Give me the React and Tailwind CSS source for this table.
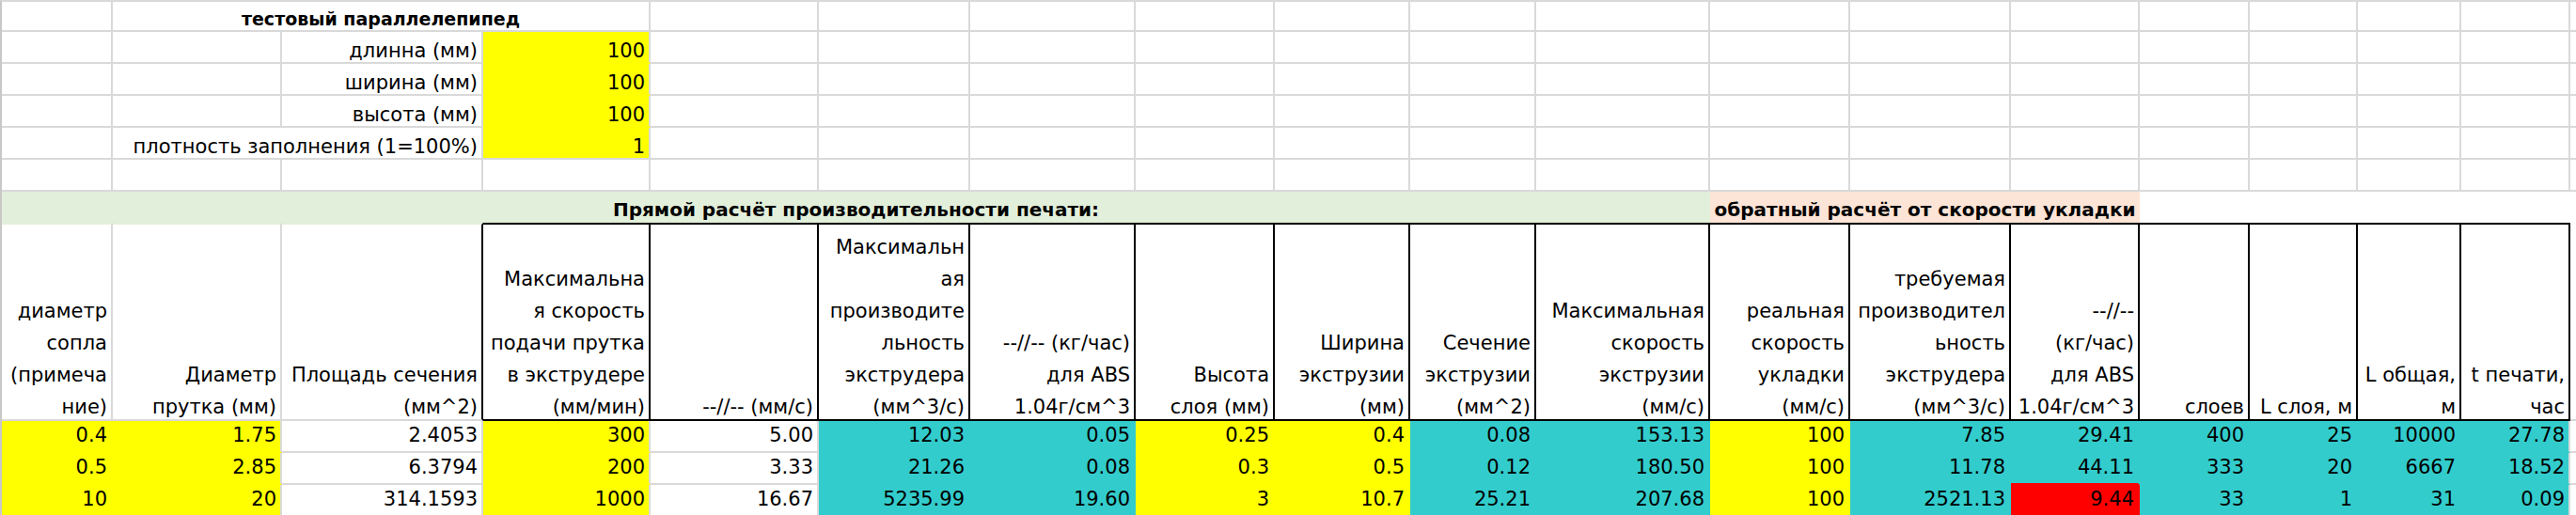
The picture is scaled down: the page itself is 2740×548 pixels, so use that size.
const fills = { y: 'bg-[#ffff00]', c: 'bg-[#33cccc]', r: 'bg-[#ff0000]', w: 'bg-white' };
const rightB = { g: 'border-r-[#d9d9d9]', y: 'border-r-[#ffff00]', c: 'border-r-[#33cccc]', r: 'border-r-[#ff0000]', k: 'border-r-black' };
const bottomB = { g: 'border-b-[#d9d9d9]', y: 'border-b-[#ffff00]', c: 'border-b-[#33cccc]', r: 'border-b-[#ff0000]', k: 'border-b-black' };

const headers = [
  ['диаметр', 'сопла', '(примеча', 'ние)'],
  ['Диаметр', 'прутка (мм)'],
  ['Площадь сечения', '(мм^2)'],
  ['Максимальна', 'я скорость', 'подачи прутка', 'в экструдере', '(мм/мин)'],
  ['--//-- (мм/с)'],
  ['Максимальн', 'ая', 'производите', 'льность', 'экструдера', '(мм^3/с)'],
  ['--//-- (кг/час)', 'для ABS', '1.04г/см^3'],
  ['Высота', 'слоя (мм)'],
  ['Ширина', 'экструзии', '(мм)'],
  ['Сечение', 'экструзии', '(мм^2)'],
  ['Максимальная', 'скорость', 'экструзии', '(мм/с)'],
  ['реальная', 'скорость', 'укладки', '(мм/с)'],
  ['требуемая', 'производител', 'ьность', 'экструдера', '(мм^3/с)'],
  ['--//--', '(кг/час)', 'для ABS', '1.04г/см^3'],
  ['слоев'],
  ['L слоя, м'],
  ['L общая,', 'м'],
  ['t печати,', 'час'],
];

const rows = [
  ['0.4', '1.75', '2.4053', '300', '5.00', '12.03', '0.05', '0.25', '0.4', '0.08', '153.13', '100', '7.85', '29.41', '400', '25', '10000', '27.78'],
  ['0.5', '2.85', '6.3794', '200', '3.33', '21.26', '0.08', '0.3', '0.5', '0.12', '180.50', '100', '11.78', '44.11', '333', '20', '6667', '18.52'],
  ['10', '20', '314.1593', '1000', '16.67', '5235.99', '19.60', '3', '10.7', '25.21', '207.68', '100', '2521.13', '9.44', '33', '1', '31', '0.09'],
];

const baseFill = ['y', 'y', 'w', 'y', 'w', 'c', 'c', 'y', 'y', 'c', 'c', 'y', 'c', 'c', 'c', 'c', 'c', 'c', 'w'];

function fillAt(r, c) {
  if (r > 2) return 'w';
  if (r === 2 && c === 13) return 'r';
  return baseFill[c];
}

function Blank({ last, bottom = 'g' }) {
  return <div className={`border-b-2 ${bottomB[bottom]} ${last ? '' : 'border-r-2 border-r-[#d9d9d9]'}`} />;
}

// empty cells from column E to S
function Rest() {
  return Array.from({ length: 15 }, (_, i) => <Blank key={i} last={i === 14} />);
}

function TopRow({ label, value, wide, last }) {
  return (
    <>
      <Blank />
      {wide ? (
        <div className="col-span-2 border-r-2 border-r-[#d9d9d9] border-b-2 border-b-[#d9d9d9] flex items-end justify-end pr-1 leading-[24px] whitespace-nowrap">
          {label}
        </div>
      ) : (
        <>
          <Blank />
          <div className="border-r-2 border-r-[#d9d9d9] border-b-2 border-b-[#d9d9d9] flex items-end justify-end pr-1 leading-[24px] whitespace-nowrap">
            {label}
          </div>
        </>
      )}
      <div className={`bg-[#ffff00] border-r-2 border-r-[#d9d9d9] border-b-2 ${last ? 'border-b-[#d9d9d9]' : 'border-b-[#ffff00]'} flex items-end justify-end pr-1 leading-[24px]`}>
        {value}
      </div>
      <Rest />
    </>
  );
}

function HeaderCell({ lines, i }) {
  let cls;
  if (i < 3) {
    cls = `border-t-2 border-t-[#e2efda] border-b-2 border-b-[#d9d9d9] border-r-2 ${i === 2 ? 'border-r-black' : 'border-r-[#d9d9d9]'}`;
  } else {
    cls = 'border-t-2 border-b-2 border-r-2 border-black';
  }
  return (
    <div className={`${cls} flex flex-col items-end justify-end pr-1 leading-[34px] whitespace-nowrap`}>
      <div className="flex flex-col items-end translate-y-1">
        {lines.map((l, k) => (
          <span key={k}>{l}</span>
        ))}
      </div>
    </div>
  );
}

function DataCell({ r, c, value }) {
  const f = fillAt(r, c);
  const next = fillAt(r, c + 1);
  const below = fillAt(r + 1, c);
  let rb = f === 'w' || next === 'w' ? 'g' : f;
  let bb = f === 'w' || below === 'w' ? 'g' : below === 'r' ? 'r' : f;
  return (
    <div className={`${fills[f]} border-r-2 ${rightB[rb]} border-b-2 ${bottomB[bb]} flex items-start justify-end pr-1 leading-[30px]`}>
      {value}
    </div>
  );
}

export default function App() {
  return (
    <div className="w-[2740px] h-[548px] overflow-hidden bg-white text-black font-['DejaVu_Sans',sans-serif] text-[21px]">
      <div className="grid grid-cols-[118px_180px_214px_178px_179px_161px_176px_148px_144px_134px_185px_149px_171px_137px_117px_115px_110px_116px_1fr] grid-rows-[32px_34px_34px_34px_34px_34px_33px_211px_34px_34px_36px] border-t-2 border-t-[#d9d9d9] border-l-2 border-l-[#c8c8c8]">
        {/* row 1 */}
        <Blank />
        <div className="col-span-3 border-r-2 border-r-[#d9d9d9] border-b-2 border-b-[#d9d9d9] flex items-end justify-center leading-[24px] font-bold text-[19px] whitespace-nowrap">
          тестовый параллелепипед
        </div>
        <Rest />

        {/* rows 2-5 */}
        <TopRow label="длинна (мм)" value="100" />
        <TopRow label="ширина (мм)" value="100" />
        <TopRow label="высота (мм)" value="100" />
        <TopRow label="плотность заполнения (1=100%)" value="1" wide last />

        {/* row 6 */}
        <Blank />
        <Blank />
        <Blank />
        <Blank />
        <Rest />

        {/* section band */}
        <div className="col-span-11 bg-[#e2efda] flex items-end justify-center pb-[2px] leading-[24px] font-bold text-[20px] whitespace-nowrap">
          Прямой расчёт производительности печати:
        </div>
        <div className="col-span-3 bg-[#fce4d6] flex items-end justify-center pb-[2px] leading-[24px] font-bold text-[20px] whitespace-nowrap">
          обратный расчёт от скорости укладки
        </div>
        <div className="col-span-4" />
        <div />

        {/* header */}
        {headers.map((lines, i) => (
          <HeaderCell key={i} lines={lines} i={i} />
        ))}
        <div className="border-t-2 border-t-white border-b-2 border-b-[#d9d9d9]" />

        {/* data */}
        {rows.map((row, r) => (
          <div key={r} className="contents">
            {row.map((v, c) => (
              <DataCell key={c} r={r} c={c} value={v} />
            ))}
            <div className="border-b-2 border-b-[#d9d9d9]" />
          </div>
        ))}
      </div>
    </div>
  );
}
